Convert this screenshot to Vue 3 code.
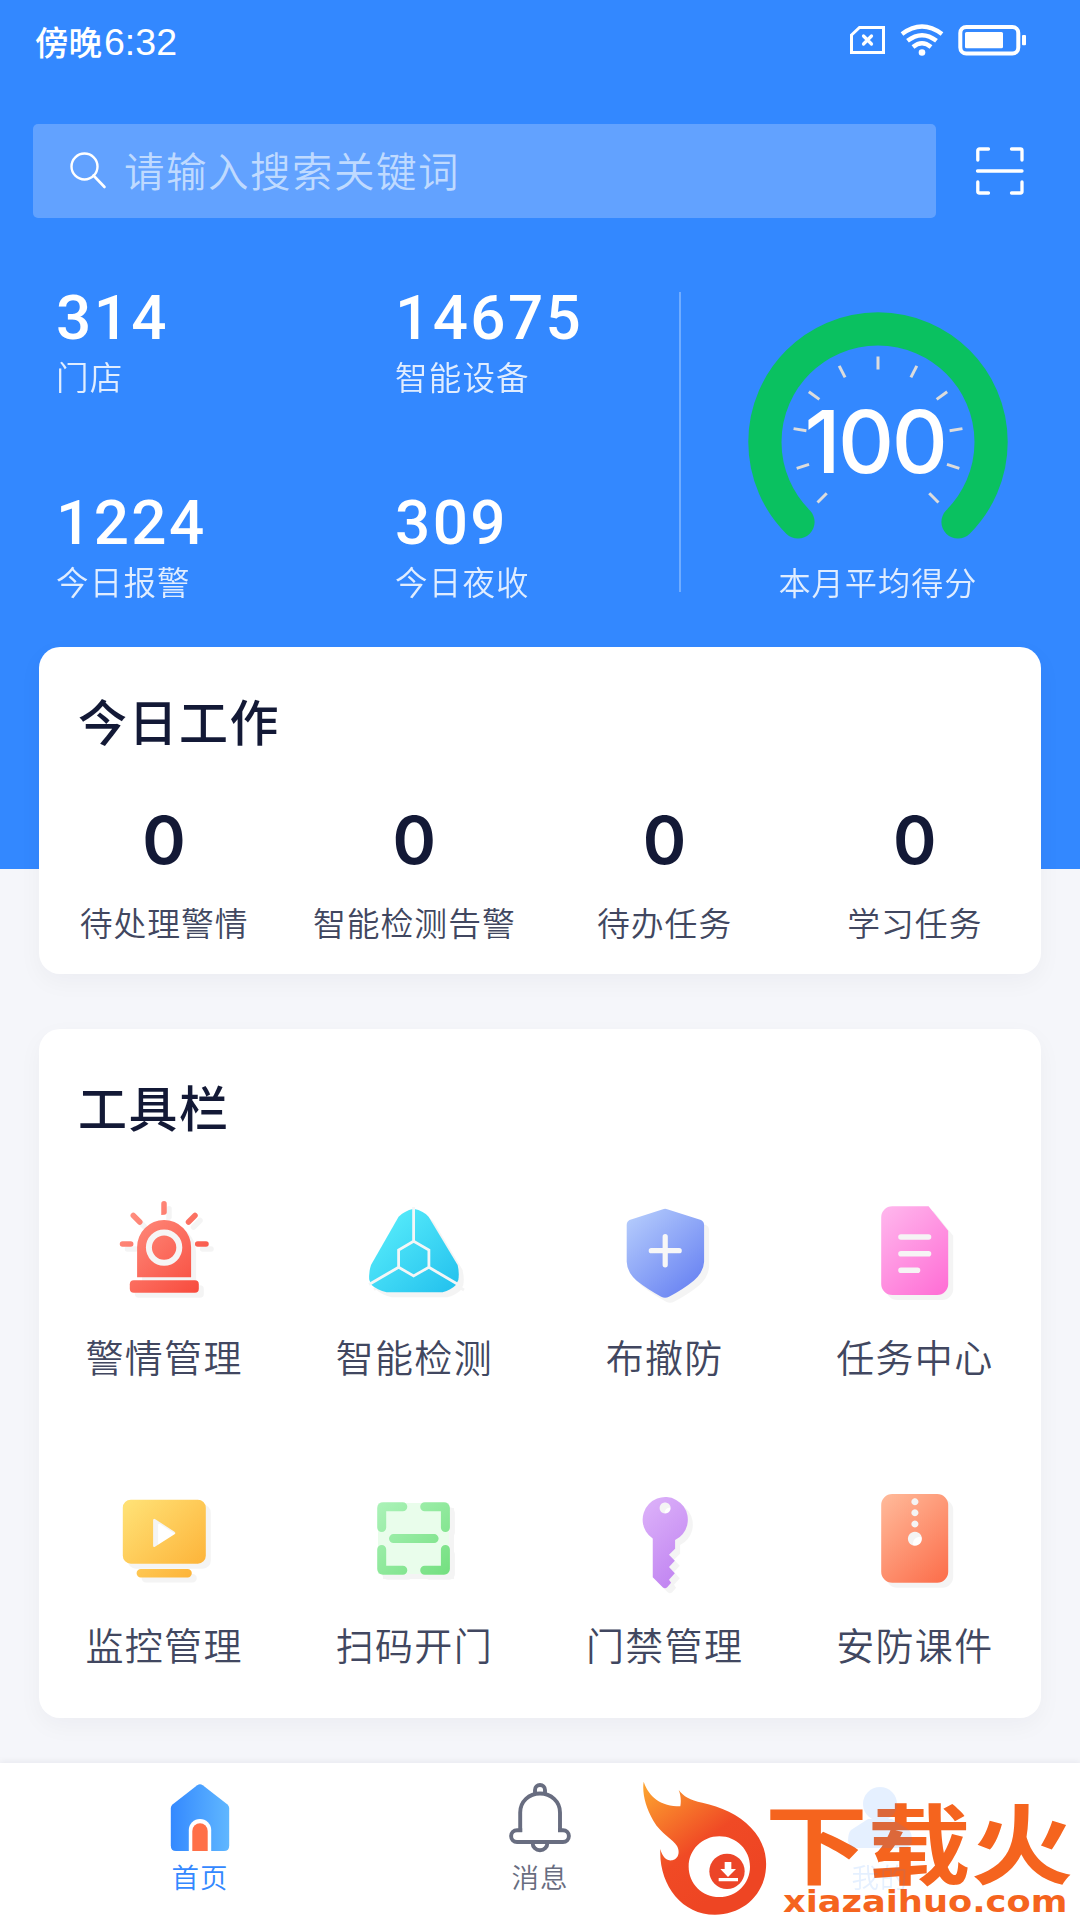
<script setup>
const stats = [
  { value: '314', label: '门店' },
  { value: '14675', label: '智能设备' },
  { value: '1224', label: '今日报警' },
  { value: '309', label: '今日夜收' },
]

const score = 100
const ticks = Array.from({ length: 11 }, (_, i) => -135 + i * 27)

const works = [
  { value: 0, label: '待处理警情' },
  { value: 0, label: '智能检测告警' },
  { value: 0, label: '待办任务' },
  { value: 0, label: '学习任务' },
]

const tools = [
  { icon: 'alarm', label: '警情管理', from: '#ff8e7f', to: '#f84c3e' },
  { icon: 'detect', label: '智能检测', from: '#58edfb', to: '#26c3ee' },
  { icon: 'shield', label: '布撤防', from: '#b4cbfc', to: '#6680f2' },
  { icon: 'task', label: '任务中心', from: '#ffb4ec', to: '#ff6ed5' },
  { icon: 'monitor', label: '监控管理', from: '#ffe074', to: '#fdb136' },
  { icon: 'scan', label: '扫码开门', from: '#abf2b8', to: '#72df7e' },
  { icon: 'key', label: '门禁管理', from: '#dfb6fa', to: '#bd7ef0' },
  { icon: 'course', label: '安防课件', from: '#ffb797', to: '#fc6e4b' },
]
</script>

<template>
  <div class="page">
    <header class="hero">
      <div class="status-bar">
        <div class="status-bar__time"><span class="status-bar__period">傍晚</span>6:32</div>
        <svg class="status-bar__icons" width="180" height="36" viewBox="0 0 180 36">
          <path d="M3.500 12 11.500 4.500H35.500V29.500H3.500z" fill="none" stroke="#fff" stroke-width="3" />
          <path d="m15.500 13 8 8m0-8-8 8" stroke="#fff" stroke-width="3.200" stroke-linecap="round" />
          <g fill="none" stroke="#fff" stroke-width="4.400">
            <path d="M54 11Q74-4 94 11" />
            <path d="M59.500 17.800Q74 6.500 88.500 17.800" />
            <path d="M65 24Q74 16.500 83 24" />
          </g>
          <circle cx="74" cy="29.500" r="3.300" fill="#fff" />
          <rect x="112.300" y="4" width="58" height="26.500" rx="6" fill="none" stroke="#fff" stroke-width="4" />
          <rect x="117" y="9" width="38" height="16.200" rx="1.500" fill="#fff" />
          <rect x="174" y="12" width="4" height="10.200" rx="1" fill="#fff" />
        </svg>
      </div>

      <div class="search">
        <div class="search__box">
          <svg width="40" height="40" viewBox="0 0 40 40" fill="none" stroke="#fff">
            <circle cx="15.500" cy="15.500" r="13" stroke-width="2.400" />
            <path d="M24.500 24.500 35.500 36" stroke-width="2.600" stroke-linecap="round" />
          </svg>
          <span class="search__placeholder">请输入搜索关键词</span>
        </div>
        <svg class="search__scan" width="50" height="50" viewBox="0 0 50 50">
          <path
            d="M2.800 14V4.500Q2.800 3 4.500 3H13.500M36.500 3H45.500Q47 3 47 4.500V14M2.800 36V45.500Q2.800 47 4.500 47H13.500M36.500 47H45.500Q47 47 47 45.500V36M2.500 25H47"
            fill="none"
            stroke="#fff"
            stroke-width="3.300"
            stroke-linecap="round"
          />
        </svg>
      </div>

      <div class="overview">
        <div class="overview__stats">
          <div v-for="item in stats" :key="item.label" class="stat">
            <div class="stat__value">{{ item.value }}</div>
            <div class="stat__label">{{ item.label }}</div>
          </div>
        </div>
        <div class="overview__score">
          <svg width="270" height="242" viewBox="-135 -135 270 242">
            <path d="M-80 80A113.100 113.100 0 1 1 80 80" fill="none" stroke="#0ac160" stroke-width="33.200" stroke-linecap="round" />
            <line
              v-for="angle in ticks"
              :key="angle"
              y1="-85.500"
              y2="-72.500"
              stroke="#dcdcdc"
              stroke-width="3"
              :transform="`rotate(${angle})`"
            />
            <text class="score-value" x="-3" y="31" text-anchor="middle">{{ score }}</text>
          </svg>
          <div class="overview__caption">本月平均得分</div>
        </div>
      </div>
    </header>

    <main class="content">
      <section class="card card--work">
        <h2 class="card__title">今日工作</h2>
        <div class="works">
          <div v-for="item in works" :key="item.label" class="work">
            <div class="work__value">{{ item.value }}</div>
            <div class="work__label">{{ item.label }}</div>
          </div>
        </div>
      </section>

      <section class="card card--tools">
        <h2 class="card__title">工具栏</h2>
        <div class="tools">
          <div v-for="tool in tools" :key="tool.icon" class="tool">
            <svg class="tool__icon" width="100" height="100" viewBox="0 0 100 100">
              <defs>
                <linearGradient :id="`tool-${tool.icon}`" gradientUnits="userSpaceOnUse" x1="15" y1="15" x2="85" y2="90">
                  <stop offset="0" :stop-color="tool.from" />
                  <stop offset="1" :stop-color="tool.to" />
                </linearGradient>
              </defs>

              <g v-if="tool.icon === 'alarm'" :fill="`url(#tool-${tool.icon})`">
                <path d="M23.100 77.300V47a27 27 0 0 1 54 0V77.300z" />
                <rect x="15.800" y="80.300" width="69" height="12.500" rx="4" />
                <path
                  d="M50 3.800V12.001L50.010 12M8.500 44H16.700M83.700 44H92M19.300 15.500 25.800 22M81 15.500 74.500 22"
                  :stroke="`url(#tool-${tool.icon})`"
                  stroke-width="5.500"
                  stroke-linecap="round"
                />
                <circle cx="50.100" cy="47.600" r="15.200" fill="none" stroke="#f6f5f5" stroke-width="6" />
              </g>

              <g v-else-if="tool.icon === 'detect'">
                <path
                  d="M49.600 8.700Q60 11 64.600 16.700L93.600 65Q95.500 73 94.300 80L91.900 85Q87 90 78.600 92.300H22.600Q13 90 7.600 85L5.300 80Q4.500 73 7 65L34.600 16.700Q40 11 49.600 8.700z"
                  :fill="`url(#tool-${tool.icon})`"
                />
                <path
                  d="M49.600 7V41.300L64.900 50V67.300L49.600 76 34.600 67.300V50L49.600 41.300M64.900 67.300 95 85M34.600 67.300 5 84.500"
                  fill="none"
                  stroke="#f3f6f7"
                  stroke-width="2.800"
                />
              </g>

              <g v-else-if="tool.icon === 'shield'">
                <path
                  d="M48 9.300Q50 8.300 52.200 9.300L86 20Q89.100 21.500 89.100 25V61.700Q88.500 72 79 80.500 68 89.500 54 96.700 50 98.800 46.200 96.700 32 89 21.400 80.500 12 72 11.700 61.700V25Q11.700 21.500 14.500 20z"
                  :fill="`url(#tool-${tool.icon})`"
                />
                <path d="M36.300 50.700H64.200M50.200 36.700V64.800" stroke="#f7f7f7" stroke-width="5.200" stroke-linecap="round" />
              </g>

              <g v-else-if="tool.icon === 'task'">
                <path
                  d="M27.200 6.300H63.600L83.200 30.700V84a11 11 0 0 1-11 11h-45a11 11 0 0 1-11-11V17.300a11 11 0 0 1 11-11z"
                  :fill="`url(#tool-${tool.icon})`"
                />
                <path d="M36 37H63.500M36 53.700H63.500M36 70.200H52.500" stroke="#f6f4f5" stroke-width="5.600" stroke-linecap="round" />
              </g>

              <path
                v-else-if="tool.icon === 'monitor'"
                d="M16.800 11.700H83.800a8 8 0 0 1 8 8V67.700a8 8 0 0 1-8 8H16.800a8 8 0 0 1-8-8V19.700a8 8 0 0 1 8-8zM39.100 32.500V57.500Q39.100 60 41.300 58.500L60.500 46.300Q62.200 45 60.500 43.700L41.300 31.300Q39.100 30 39.100 32.500zM26.800 81H73.600a4.200 4.200 0 0 1 0 8.400H26.800a4.200 4.200 0 0 1 0-8.400z"
                :fill="`url(#tool-${tool.icon})`"
                fill-rule="evenodd"
              />

              <g v-else-if="tool.icon === 'scan'">
                <rect x="14" y="15" width="71" height="71" fill="#e9fdeb" />
                <path
                  d="M38.800 18.800H19Q17.700 18.800 17.700 20V39.500M60.700 18.800H80Q81.400 18.800 81.400 20V39.500M17.700 61.500V81Q17.700 82.200 19 82.200H38.800M60.700 82.200H80Q81.400 82.200 81.400 81V61.500M29.500 50.600H70.100"
                  fill="none"
                  :stroke="`url(#tool-${tool.icon})`"
                  stroke-width="9"
                  stroke-linecap="round"
                />
              </g>

              <path
                v-else-if="tool.icon === 'key'"
                d="M37.750 50.500A22.600 22.600 0 1 1 60.100 52V60.700L54 66.700 59.800 72.700 54 79 59.800 85.300 54 91.700 56.100 94.700 52.200 99.300Q50 101 47.700 99.300L37.750 89.300zM50.100 14.500a5.500 5.500 0 1 0 .01 0z"
                :fill="`url(#tool-${tool.icon})`"
                fill-rule="evenodd"
              />

              <path
                v-else
                d="M27.200 6H72.200a11 11 0 0 1 11 11V83.700a11 11 0 0 1-11 11h-45a11 11 0 0 1-11-11V17a11 11 0 0 1 11-11zM49.900 10.200a3.500 3.500 0 1 0 .01 0zM49.900 21.200a3.500 3.500 0 1 0 .01 0zM49.900 32.500a3.500 3.500 0 1 0 .01 0zM49.900 43.700a7 7 0 1 0 .01 0z"
                :fill="`url(#tool-${tool.icon})`"
                fill-rule="evenodd"
              />
            </svg>
            <div class="tool__label">{{ tool.label }}</div>
          </div>
        </div>
      </section>
    </main>

    <nav class="tabbar">
      <div class="tab tab--active">
        <svg width="72" height="72" viewBox="0 0 72 72">
          <defs>
            <linearGradient id="tab-home">
              <stop offset="0" stop-color="#3489ff" />
              <stop offset="1" stop-color="#60b7ff" />
            </linearGradient>
          </defs>
          <path
            d="M33.200 2.300Q36 .2 38.800 2.300L63.500 21.500Q65.200 23 65.200 25V62.500Q65.200 68 60 68H12Q6.800 68 6.800 62.500V25Q6.800 23 8.500 21.500z"
            fill="url(#tab-home)"
          />
          <path d="M24.800 68.500V47.200a11.200 11.200 0 0 1 22.400 0V68.500z" fill="#fff" />
          <path d="M28.300 68V48a7.700 7.700 0 0 1 15.400 0V68z" fill="#ff7048" />
        </svg>
        <span>首页</span>
      </div>
      <div class="tab">
        <svg width="72" height="72" viewBox="0 0 72 72" fill="none" stroke="#686d80" stroke-width="3.900">
          <path d="M16.200 49V29.500C16.200 18.500 25 10.500 36 10.500S56 18.500 56 29.500V49" />
          <path d="M18.200 47.200H13a5.900 5.900 0 0 0 0 11.800H59a5.900 5.900 0 0 0 0-11.800H54" />
          <path d="M31 10.200V7a5 5 0 0 1 10 0V10.200M28.600 60a7.400 7.200 0 0 0 14.800 0" />
        </svg>
        <span>消息</span>
      </div>
      <div class="tab tab--faded">
        <svg width="72" height="72" viewBox="0 0 72 72" fill="#3388ff">
          <path d="M36 4a17 17 0 0 1 17 17c0 7-4 12-9 15H28c-5-3-9-8-9-15A17 17 0 0 1 36 4z" />
          <path d="M24 36H48L65 47Q68 50 68 58 67 65 60 65H12Q5 65 4 58 4 50 7 47z" />
        </svg>
        <span>我的</span>
      </div>

      <svg class="watermark" width="460" height="160" viewBox="0 0 1380 480">
        <defs>
          <linearGradient id="flame" gradientUnits="userSpaceOnUse" x1="70" y1="90" x2="300" y2="400">
            <stop offset="0" stop-color="#fca02f" />
            <stop offset=".6" stop-color="#f04a25" />
            <stop offset="1" stop-color="#ee4523" />
          </linearGradient>
        </defs>
        <path
          d="M71 65C88 113 122 138 181 139 184 121 182 105 176 90 191 109 209 121 247 128 302 140 356 163 393 203 426 237 441 279 438 323 433 405 368 464 285 464 183 464 116 371 121 267 127 293 143 304 157 301 175 297 181 277 171 258 159 237 123 222 100 182 76 140 66 98 71 65zM298 229C246 229 206 270 206 320S246 411 298 411 390 370 390 320 350 229 298 229z"
          fill="url(#flame)"
          fill-rule="evenodd"
        />
        <circle cx="321" cy="334" r="53" fill="#ec4528" />
        <path d="M314 306H334V327H348L324 351 301 327H314zM296 354H354V364H296z" fill="#fff" />
        <g fill="#f5641e">
          <text class="watermark__name" x="435" y="354" textLength="925" lengthAdjust="spacingAndGlyphs">下载火</text>
          <text class="watermark__site" x="489" y="455" textLength="853" lengthAdjust="spacingAndGlyphs">xiazaihuo.com</text>
        </g>
      </svg>
    </nav>
  </div>
</template>

<style>
body {
  background: #f5f6fa;
}
</style>

<style scoped>
.page {
  display: flex;
  flex-direction: column;
  width: 1080px;
  height: 1920px;
  overflow: hidden;
  background: #f5f6fa;
  color: #131936;
  font-family: "Noto Sans CJK SC", sans-serif;
}

.hero {
  box-sizing: border-box;
  flex: none;
  height: 869px;
  background: #3388ff;
  color: #fff;
}

.status-bar {
  display: flex;
  justify-content: space-between;
  align-items: center;
  height: 84px;
  padding: 0 52px 0 35px;
}

.status-bar__time {
  display: flex;
  align-items: center;
  gap: 2px;
  font: 37.5px/40px "Liberation Sans", sans-serif;
}

.status-bar__period {
  font: 500 33.500px/40px "Noto Sans CJK SC", sans-serif;
  margin-top: -2px;
}

.status-bar__icons {
  margin-top: -2px;
}

.search {
  display: flex;
  align-items: center;
  gap: 39px;
  margin-top: 40px;
  padding-left: 33px;
}

.search__box {
  display: flex;
  align-items: center;
  gap: 15px;
  box-sizing: border-box;
  width: 903px;
  height: 94px;
  padding-left: 36px;
  border-radius: 5px;
  background: #62a2ff;
}

.search__placeholder {
  margin-top: -2px;
  color: #bfdaff;
  font-size: 40.5px;
  font-weight: 350;
  letter-spacing: 1.5px;
  line-height: 60px;
}

.overview {
  display: flex;
  margin-top: 70px;
}

.overview__stats {
  display: grid;
  grid-template-columns: 339px 284px;
  grid-auto-rows: 204.5px;
  box-sizing: border-box;
  height: 300px;
  padding-left: 56px;
  margin-top: 4px;
  border-right: 2px solid #70acff;
}

.stat {
  margin-top: -4px;
}

.stat__value {
  font: 500 62px/60px Roboto, sans-serif;
  letter-spacing: 2.4px;
}

.stat__label {
  margin-top: 6px;
  font-size: 32.500px;
  font-weight: 350;
  letter-spacing: 1.2px;
  line-height: 44px;
  opacity: 0.85;
}

.overview__score {
  display: flex;
  flex: 1;
  flex-direction: column;
  align-items: center;
  padding: 19px 5px 0 0;
}

.score-value {
  fill: #fff;
  font: 500 87px Inter, sans-serif;
  letter-spacing: -2.4px;
}

.overview__caption {
  margin-top: 10px;
  font-size: 32.200px;
  font-weight: 350;
  letter-spacing: 1px;
  line-height: 44px;
  opacity: 0.85;
}

.content {
  display: flex;
  flex-direction: column;
  gap: 55px;
  margin-top: -222px;
  padding: 0 39px;
}

.card {
  box-sizing: border-box;
  border-radius: 21px;
  background: #fff;
  box-shadow: 0 8px 24px rgba(20, 25, 50, 0.04);
}

.card--work {
  height: 327px;
  padding-top: 43px;
}

.card--tools {
  height: 689px;
  padding-top: 47px;
}

.card__title {
  margin: 0;
  padding-left: 39px;
  font-size: 49px;
  font-weight: 500;
  letter-spacing: 1.5px;
  line-height: 60px;
}

.works {
  display: grid;
  grid-template-columns: repeat(4, 1fr);
  margin-top: 60px;
  padding-right: 1px;
  text-align: center;
}

.work__value {
  font: 600 66px/60px Inter, sans-serif;
}

.work__label {
  margin-top: 28px;
  color: #414760;
  font-size: 32.800px;
  font-weight: 350;
  letter-spacing: 1px;
  line-height: 48px;
}

.tools {
  display: grid;
  grid-template-columns: repeat(4, 1fr);
  grid-auto-rows: 288px;
  margin-top: 64px;
  padding-right: 1px;
}

.tool {
  display: flex;
  flex-direction: column;
  align-items: center;
}

.tool__icon {
  overflow: visible;
  filter: drop-shadow(5.3px 5.3px 0 #f4f4f4);
}

.tool__label {
  margin-top: 28px;
  color: #414760;
  font-size: 38px;
  font-weight: 350;
  letter-spacing: 1.3px;
  line-height: 56px;
}

.tabbar {
  position: relative;
  display: grid;
  grid-template-columns: repeat(3, 340px);
  justify-content: center;
  flex: none;
  height: 157px;
  margin-top: auto;
  background: #fff;
  box-shadow: 0 -2px 6px rgba(20, 25, 50, 0.05);
}

.tab {
  display: flex;
  flex-direction: column;
  align-items: center;
  padding-top: 20px;
  color: #686d80;
  font-size: 27.500px;
  font-weight: 350;
  letter-spacing: 1px;
  line-height: 42px;
}

.tab--active {
  color: #3388ff;
}

/* stays above the site mark, which shows through it */
.tab--faded {
  z-index: 1;
  color: #3388ff;
  opacity: 0.12;
}

.watermark {
  position: absolute;
  right: 0;
  bottom: 0;
}

.watermark__name {
  font: 700 262px "Noto Sans CJK SC", sans-serif;
}

.watermark__site {
  font: bold 88px "DejaVu Sans", sans-serif;
}
</style>
